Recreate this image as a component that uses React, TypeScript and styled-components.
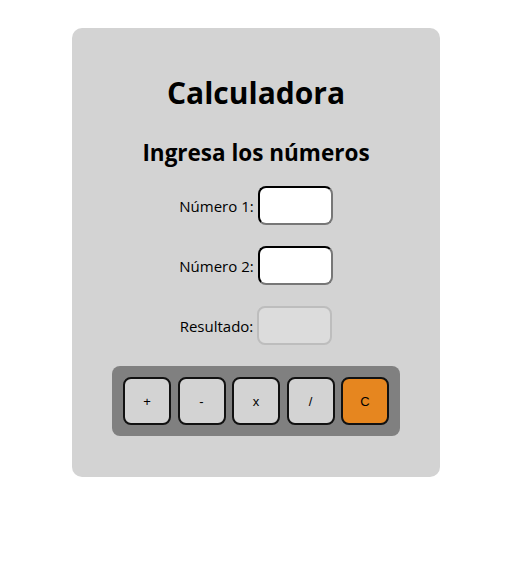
import styled, { createGlobalStyle } from "styled-components";

const GlobalStyle = createGlobalStyle`
  body {
    margin: 0;
    background: #ffffff;
    font-family: "Open Sans", "Noto Sans", sans-serif;
  }
`;

const Page = styled.div`
  display: flex;
  justify-content: center;
  padding: 28px 4px 40px 0;
`;

const Card = styled.div`
  width: 368px;
  box-sizing: border-box;
  background-color: #d3d3d3;
  border-radius: 10px;
  padding: 22px 20px 41px;
  display: flex;
  flex-direction: column;
  align-items: center;
`;

const Title = styled.h1`
  font-size: 30px;
  font-weight: 700;
  margin: 21px 0 0;
  line-height: 43px;
  color: #000;
`;

const Subtitle = styled.h2`
  font-size: 22.5px;
  font-weight: 700;
  margin: 23px 0 0;
  line-height: 32px;
  color: #000;
`;

const Fields = styled.div`
  margin-top: 17px;
  display: flex;
  flex-direction: column;
  align-items: center;
  gap: 21px;
`;

const Row = styled.label`
  display: flex;
  align-items: center;
  gap: 4px;
  font-size: 15px;
  color: #000;
`;

const Field = styled.input<{ $readOnly?: boolean }>`
  width: 75px;
  height: 39px;
  box-sizing: border-box;
  border-radius: 8px;
  border: 2px ${(p) => (p.$readOnly ? "solid" : "inset")};
  border-color: ${(p) => (p.$readOnly ? "#bdbdbd" : "#1e1e1e #777 #777 #1e1e1e")};
  background: ${(p) => (p.$readOnly ? "#dcdcdc" : "#ffffff")};
  padding: 0 6px;
  font-size: 14px;
  outline: none;
`;

const Keypad = styled.div`
  margin-top: 21px;
  display: flex;
  gap: 6.5px;
  padding: 11px;
  background-color: #808080;
  border-radius: 8px;
`;

const Key = styled.button<{ $accent?: boolean }>`
  width: 48px;
  height: 48px;
  box-sizing: border-box;
  border: 2px solid #111;
  border-radius: 8px;
  background-color: ${(p) => (p.$accent ? "#e6861f" : "#d3d3d3")};
  font-family: "Liberation Sans", Arial, sans-serif;
  font-size: 13px;
  color: #000;
  padding: 0;
  cursor: pointer;
`;

export default function App() {
  const keys = ["+", "-", "x", "/"];
  return (
    <>
      <GlobalStyle />
      <Page>
        <Card>
          <Title>Calculadora</Title>
          <Subtitle>Ingresa los números</Subtitle>
          <Fields>
            <Row>
              Número 1: <Field type="text" />
            </Row>
            <Row>
              Número 2: <Field type="text" />
            </Row>
            <Row>
              Resultado: <Field type="text" $readOnly readOnly />
            </Row>
          </Fields>
          <Keypad>
            {keys.map((k) => (
              <Key key={k}>{k}</Key>
            ))}
            <Key $accent>C</Key>
          </Keypad>
        </Card>
      </Page>
    </>
  );
}
